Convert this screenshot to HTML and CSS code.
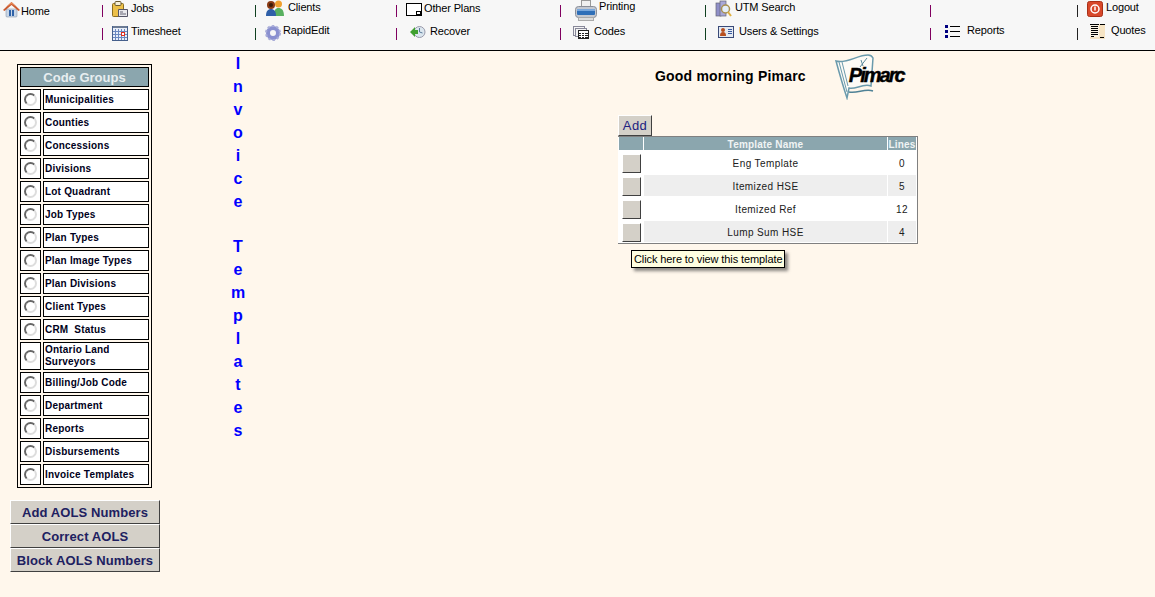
FILE: index.html
```html
<!DOCTYPE html>
<html lang="en">
<head>
    <meta charset="UTF-8">
    <title>Invoice Templates</title>
    <link rel="stylesheet" href="styles.css">
</head>
<body>
    <div class="nav">
        <div class="nav-cell nav-home">
            <svg class="ic ic-home" viewBox="0 0 17 17"><path d="M3 8h11v7a1 1 0 0 1-1 1H4a1 1 0 0 1-1-1z" fill="#c9d6e6" stroke="#7b8aa0" stroke-width=".5"/><path d="M0 9 8.500 1 17 9l-1.500 1-7-6-7 6z" fill="#c95a30"/><path d="M3 6 8.500 1 14 6 8.500 3z" fill="#e88a5a"/><rect x="6" y="9" width="5" height="6" fill="#2f62a8"/><rect x="8" y="9" width="1" height="6" fill="#c9d6e6"/></svg>
            <a class="lbl top-5 gap-1">Home</a>
        </div>
        <div class="nav-cell"><i class="sep sep-p"></i>
            <svg class="ic ic-jobs" viewBox="0 0 16 16"><rect x=".5" y="2.500" width="11" height="13" rx="1" fill="#ecc04a" stroke="#8a6d20"/><rect x="3" y=".5" width="6" height="4" rx="1" fill="#f6f0d8" stroke="#6a5a30"/><path d="M6.500 8.500h9v7h-9z" fill="#e8e8ec" stroke="#556"/><path d="M8 11h3M8 13h6" stroke="#667"/></svg>
            <a class="lbl top-2 gap-3">Jobs</a>
        </div>
        <div class="nav-cell"><i class="sep sep-g"></i>
            <svg class="ic ic-clients" viewBox="0 0 20 16"><circle cx="13.500" cy="4" r="3.500" fill="#f0a030"/><path d="M9 16c0-6 1.500-8 4.500-8s5.500 2 5.500 8z" fill="#58b060"/><circle cx="6" cy="5" r="4" fill="#8a3a14"/><circle cx="6" cy="5" r="2" fill="#3a1a08"/><path d="M1 16c0-5 2-7 5-7s5 2 5 7z" fill="#2f5fa8"/></svg>
            <a class="lbl top-1 gap-5">Clients</a>
        </div>
        <div class="nav-cell"><i class="sep sep-p"></i>
            <svg class="ic ic-plans" viewBox="0 0 16 13"><rect x=".5" y=".5" width="15" height="12" fill="#fff" stroke="#000"/><rect x="10.500" y="8.500" width="4" height="3" fill="#fff" stroke="#000"/></svg>
            <a class="lbl top-2 gap-2">Other Plans</a>
        </div>
        <div class="nav-cell"><i class="sep sep-p"></i>
            <svg class="ic ic-print" viewBox="0 0 22 21"><rect x="6.500" y=".5" width="9" height="7" fill="#f0f0f0" stroke="#999"/><rect x=".5" y="6.500" width="21" height="11" rx="3" fill="#c4c8d0" stroke="#8a8e98"/><rect x="2" y="9" width="18" height="6" rx="1" fill="#2f6fb8"/><rect x="2" y="9" width="18" height="2" fill="#7aa8dc"/><rect x="3.500" y="17.500" width="15" height="3" fill="#ddd" stroke="#aaa"/></svg>
            <a class="lbl top-0 gap-2">Printing</a>
        </div>
        <div class="nav-cell"><i class="sep sep-g"></i>
            <svg class="ic ic-utm" viewBox="0 0 17 17"><rect x="1" y="3" width="5" height="13" fill="#8f8fc8" stroke="#667" stroke-width=".7"/><rect x="5" y="1" width="6" height="15" fill="#a8a8d8" stroke="#667" stroke-width=".7"/><circle cx="10.500" cy="9" r="4" fill="#e4eef8" stroke="#a89050" stroke-width="1.500"/><path d="m13 12 3 4" stroke="#e0b040" stroke-width="2"/></svg>
            <a class="lbl top-1 gap-3">UTM Search</a>
        </div>
        <div class="nav-cell"><i class="sep sep-p"></i></div>
        <div class="nav-cell"><i class="sep sep-d"></i>
            <svg class="ic ic-logout" viewBox="0 0 16 16"><rect x=".5" y=".5" width="15" height="15" rx="2" fill="#d8482a" stroke="#a83018"/><circle cx="8" cy="8" r="4" fill="none" stroke="#fff" stroke-width="1.500"/><path d="M8 5.500v4" stroke="#fff" stroke-width="1.500"/></svg>
            <a class="lbl top-1 gap-3">Logout</a>
        </div>

        <div class="nav-cell"></div>
        <div class="nav-cell"><i class="sep sep-p"></i>
            <svg class="ic ic-time" viewBox="0 0 16 16"><rect x=".5" y="1.500" width="15" height="14" fill="#e8eef8" stroke="#46608c"/><rect x="1" y="1" width="14" height="2" fill="#6a7a94"/><path d="M1 6.500h14M1 9.500h14M1 12.500h14M3.500 4v11M6.500 4v11M9.500 4v11M12.500 4v11" stroke="#6a88c0"/><rect x="9.500" y="7.500" width="3" height="3" fill="#fff" stroke="#e03020"/></svg>
            <a class="lbl top-2 gap-3">Timesheet</a>
        </div>
        <div class="nav-cell"><i class="sep sep-g"></i>
            <svg class="ic ic-rapid" viewBox="0 0 16 16"><circle cx="8" cy="8" r="5" fill="none" stroke="#8a90d0" stroke-width="4"/><circle cx="8" cy="8" r="7" fill="none" stroke="#a8acd8" stroke-width="2" stroke-dasharray="2.500 2"/></svg>
            <a class="lbl top-1 gap-2">RapidEdit</a>
        </div>
        <div class="nav-cell"><i class="sep sep-p"></i>
            <svg class="ic ic-recover" viewBox="0 0 16 12"><ellipse cx="9.500" cy="6" rx="5.500" ry="5.500" fill="#dbe6ee" stroke="#99a"/><path d="M9.500 6V2M9.500 6l3 1" stroke="#5a7a9a"/><path d="M0 6l5-5v3h3v4H5v3z" fill="#3fa030"/></svg>
            <a class="lbl top-2 gap-4">Recover</a>
        </div>
        <div class="nav-cell"><i class="sep sep-p"></i>
            <svg class="ic ic-codes" viewBox="0 0 16 13"><rect x=".5" y=".5" width="11" height="9" fill="#f4f4f4" stroke="#889"/><rect x="2.500" y="2.500" width="11" height="8" fill="#f4f4f4" stroke="#889"/><rect x="5.500" y="4.500" width="10" height="8" fill="#fff" stroke="#222"/><path d="M6 7.500h9M6 9.500h9M6 11.500h9" stroke="#222"/><path d="M8.500 5v7M11.500 5v7" stroke="#fff"/></svg>
            <a class="lbl top-2 gap-5">Codes</a>
        </div>
        <div class="nav-cell"><i class="sep sep-g"></i>
            <svg class="ic ic-users" viewBox="0 0 16 12"><rect x=".5" y=".5" width="15" height="11" fill="#e4eaf2" stroke="#3a4a78"/><circle cx="5" cy="4" r="2" fill="#b85020"/><path d="M2 10c0-3 1-4 3-4s3 1 3 4z" fill="#b85020"/><path d="M10 3.500h4M10 5.500h4M10 7.500h4" stroke="#3a5aa0"/></svg>
            <a class="lbl top-2 gap-5">Users &amp; Settings</a>
        </div>
        <div class="nav-cell"><i class="sep sep-p"></i>
            <svg class="ic ic-reports" viewBox="0 0 15 13"><path d="M0 0h3v3H0zM0 5h3v3H0zM0 10h3v3H0z" fill="#000080"/><path d="M5 1.500h10M5 6.500h10M5 11.500h10" stroke="#000"/></svg>
            <a class="lbl top-1 gap-7">Reports</a>
        </div>
        <div class="nav-cell"><i class="sep sep-d"></i>
            <svg class="ic ic-quotes" viewBox="0 0 15 15"><rect width="15" height="15" fill="#f6e4c4"/><rect width="9" height="13" fill="#fbf3e4"/><path d="M0 .5h9M1 2.500h7M1 4.500h7M1 6.500h7M1 8.500h7M1 10.500h7M1 12.500h3M10 .5h5M10 13.500h4" stroke="#000"/></svg>
            <a class="lbl top-1 gap-6">Quotes</a>
        </div>
        <div class="nav-cell"></div>
    </div>

    <div class="main">
        <div class="left">
            <table class="groups">
                <colgroup><col class="col-rad"><col class="col-name"></colgroup>
                <tr><th colspan="2">Code Groups</th></tr>
                <tr><td class="rad"><i class="radio"></i></td><td>Municipalities</td></tr>
                <tr><td class="rad"><i class="radio"></i></td><td>Counties</td></tr>
                <tr><td class="rad"><i class="radio"></i></td><td>Concessions</td></tr>
                <tr><td class="rad"><i class="radio"></i></td><td>Divisions</td></tr>
                <tr><td class="rad"><i class="radio"></i></td><td>Lot Quadrant</td></tr>
                <tr><td class="rad"><i class="radio"></i></td><td>Job Types</td></tr>
                <tr><td class="rad"><i class="radio"></i></td><td>Plan Types</td></tr>
                <tr><td class="rad"><i class="radio"></i></td><td>Plan Image Types</td></tr>
                <tr><td class="rad"><i class="radio"></i></td><td>Plan Divisions</td></tr>
                <tr><td class="rad"><i class="radio"></i></td><td>Client Types</td></tr>
                <tr><td class="rad"><i class="radio"></i></td><td>CRM&nbsp; Status</td></tr>
                <tr><td class="rad"><i class="radio"></i></td><td class="tall">Ontario Land Surveyors</td></tr>
                <tr><td class="rad"><i class="radio"></i></td><td>Billing/Job Code</td></tr>
                <tr><td class="rad"><i class="radio"></i></td><td>Department</td></tr>
                <tr><td class="rad"><i class="radio"></i></td><td>Reports</td></tr>
                <tr><td class="rad"><i class="radio"></i></td><td>Disbursements</td></tr>
                <tr><td class="rad"><i class="radio"></i></td><td>Invoice Templates</td></tr>
            </table>
            <div class="aols">
                <button class="aols-btn">Add AOLS Numbers</button>
                <button class="aols-btn">Correct AOLS</button>
                <button class="aols-btn">Block AOLS Numbers</button>
            </div>
        </div>

        <div class="vword">
            <span>I</span><span>n</span><span>v</span><span>o</span><span>i</span><span>c</span><span>e</span><span class="blank">&nbsp;</span>
            <span>T</span><span>e</span><span>m</span><span>p</span><span>l</span><span>a</span><span>t</span><span>e</span><span>s</span>
        </div>

        <div class="center">
            <div class="greet">
                <h2>Good morning Pimarc</h2>
                <div class="logo">
                    <svg class="logo-flag" viewBox="0 0 46 46">
                        <path d="M1 7C12 10 22 1 33 1c3 0 4 1 5 3l-2 28c-8-3-16 4-22 2l-2 10C8 32 4 18 1 7z" fill="#fdfbf6" stroke="#6a9aac" stroke-width="1.500"/>
                        <path d="M4 8l8 30M7 8l6 24" stroke="#6a9aac" fill="none"/>
                        <path d="M32 4l-7 9M26 6l2 6" stroke="#5b8a9c" fill="none"/>
                        <path d="M14 38c8 2 16-4 24-1" stroke="#4f8296" stroke-width="1.500" fill="none"/>
                    </svg>
                    <span class="logo-text">Pimarc</span>
                </div>
            </div>
            <button class="add-btn">Add</button>
            <table class="tpl">
                <colgroup><col class="c1"><col><col class="c3"></colgroup>
                <tr><th></th><th>Template Name</th><th>Lines</th></tr>
                <tr><td><button class="sq"></button></td><td>Eng Template</td><td>0</td></tr>
                <tr class="alt"><td class="plain"><button class="sq"></button></td><td>Itemized HSE</td><td>5</td></tr>
                <tr><td><button class="sq"></button></td><td>Itemized Ref</td><td>12</td></tr>
                <tr class="alt"><td class="plain"><button class="sq"></button></td><td>Lump Sum HSE</td><td>4</td></tr>
            </table>
            <div class="tip">Click here to view this template</div>
        </div>
    </div>
</body>
</html>
```

FILE: styles.css
```css
body {
    margin: 0;
    height: 597px;
    overflow: hidden;
    background-color: #fff7ec;
    font-family: "Liberation Sans", Arial, sans-serif;
    color: #000;
}

/* top menu */
.nav {
    display: grid;
    grid-template-columns: 102px 153px 141px 164px 145px 225px 147px 78px;
    grid-template-rows: 23px 27px;
    height: 50px;
    background-color: #f7f7f7;
    border-bottom: 1px solid #000;
    font-size: 11px;
    letter-spacing: -.15px;
}

.nav-cell {
    display: flex;
    align-items: flex-start;
}

.nav-home {
    padding-left: 3px;
}

.sep {
    flex: none;
    width: 1px;
    height: 12px;
    margin-top: 5px;
    margin-right: 9px;
}

.sep-p { background-color: #800060; }
.sep-g { background-color: #104020; }
.sep-d { background-color: #222; }

.ic {
    flex: none;
    display: block;
    width: 16px;
    height: 16px;
}

.lbl {
    line-height: 13px;
    white-space: nowrap;
    color: #000;
}

.top-0 { margin-top: 0; }
.top-1 { margin-top: 1px; }
.top-2 { margin-top: 2px; }
.top-5 { margin-top: 5px; }
.gap-1 { margin-left: 1px; }
.gap-2 { margin-left: 2px; }
.gap-3 { margin-left: 3px; }
.gap-4 { margin-left: 4px; }
.gap-5 { margin-left: 5px; }
.gap-6 { margin-left: 6px; }
.gap-7 { margin-left: 7px; }

.ic-home { width: 17px; height: 17px; margin-top: 1px; }
.ic-jobs { margin-top: 1px; }
.ic-clients { width: 20px; margin-right: -2px; }
.ic-plans { height: 13px; margin-top: 3px; }
.ic-print { width: 22px; height: 21px; margin-left: 5px; }
.ic-utm { width: 17px; height: 17px; }
.ic-logout { margin-top: 1px; }
.ic-time { margin-top: 2px; }
.ic-rapid { margin-top: 2px; }
.ic-recover { height: 12px; margin-top: 3px; margin-left: 4px; }
.ic-codes { height: 13px; margin-top: 3px; margin-left: 3px; }
.ic-users { height: 12px; margin-top: 3px; margin-left: 3px; }
.ic-reports { width: 15px; height: 13px; margin-top: 2px; margin-left: 5px; }
.ic-quotes { width: 15px; height: 15px; margin-top: 1px; margin-left: 3px; }

/* page columns */
.main {
    display: flex;
    align-items: flex-start;
}

.left {
    flex: none;
    width: 150px;
    margin-left: 10px;
    padding-top: 13px;
}

/* code groups box */
.groups {
    width: 135px;
    margin-left: 7px;
    border: 1px solid #000;
    border-spacing: 2px;
    font-size: 10px;
    font-weight: bold;
    letter-spacing: .2px;
    table-layout: fixed;
}

.col-rad { width: 21px; }

.groups th {
    height: 18px;
    padding: 0;
    background-color: #8ba6ae;
    border: 1px solid #000;
    color: #e8eef0;
    font-size: 13px;
    letter-spacing: 0;
}

.groups td {
    height: 19px;
    padding: 0 0 0 1px;
    background-color: #fff;
    border: 1px solid #000;
    line-height: 12px;
    color: #000020;
}

.groups td.rad {
    padding: 0;
}

.groups td.tall {
    height: 26px;
}

.radio {
    display: block;
    width: 13px;
    height: 13px;
    margin: 0 auto;
    border-radius: 50%;
    border: 2px solid;
    border-color: #666 #ddd #ddd #666;
    box-sizing: border-box;
    background-color: #fff;
}

.aols {
    display: flex;
    flex-direction: column;
    margin-top: 12px;
}

.aols-btn {
    width: 150px;
    height: 24px;
    padding: 0;
    background-color: #d4d0c8;
    border: 1px solid;
    border-color: #fff #404040 #404040 #fff;
    color: #202060;
    font-family: "Liberation Sans", Arial, sans-serif;
    font-size: 13px;
    font-weight: bold;
    letter-spacing: .1px;
}

/* vertical title */
.vword {
    flex: none;
    display: flex;
    flex-direction: column;
    width: 20px;
    margin-left: 68px;
    padding-top: 1px;
    color: #0000ff;
    font-size: 16px;
    font-weight: bold;
    line-height: 23px;
    text-align: center;
}

.blank {
    height: 22px;
}

.center {
    position: relative;
    margin-left: 370px;
}

.greet {
    display: flex;
    align-items: flex-start;
    padding-left: 37px;
    height: 64px;
}

.greet h2 {
    margin: 17px 0 0;
    font-size: 14px;
    line-height: 17px;
    letter-spacing: .2px;
    white-space: nowrap;
}

.logo {
    position: relative;
    width: 70px;
    height: 46px;
    margin-left: 29px;
    margin-top: 3px;
}

.logo-flag {
    position: absolute;
    left: 0;
    top: 0;
    width: 46px;
    height: 46px;
}

.logo-text {
    position: absolute;
    left: 14px;
    top: 10px;
    font-size: 20px;
    font-weight: bold;
    font-style: italic;
    letter-spacing: -2px;
    -webkit-text-stroke: .4px #000;
    color: #000;
}

.add-btn {
    display: block;
    width: 34px;
    height: 21px;
    padding: 0;
    background-color: #d4d0c8;
    border: 1px solid;
    border-color: #fff #404040 #404040 #fff;
    color: #202080;
    font-family: "Liberation Sans", Arial, sans-serif;
    font-size: 13px;
    letter-spacing: .4px;
}

/* template list */
.tpl {
    width: 300px;
    padding-bottom: 1px;
    border: 1px solid #808080;
    border-left: none;
    border-spacing: 1px 0;
    background-color: #fff;
    font-size: 10px;
    letter-spacing: .4px;
    table-layout: fixed;
    color: #202020;
}

.c1 { width: 24px; }
.c3 { width: 28px; }

.tpl th {
    height: 11px;
    padding: 2px 0 0;
    background-color: #8ba6ae;
    color: #f0f4f4;
    font-size: 10px;
    line-height: 11px;
    letter-spacing: .2px;
}

.tpl td {
    height: 20px;
    padding: 1px 0 0;
    border-top: 2px solid #fff;
    text-align: center;
}

.tpl .alt td {
    background-color: #eeeeee;
}

.tpl .alt td.plain {
    background-color: #fff;
}

.sq {
    display: block;
    width: 19px;
    height: 19px;
    margin-left: 3px;
    padding: 0;
    background-color: #d4d0c8;
    border: 1px solid;
    border-color: #fff #404040 #404040 #fff;
}

.tip {
    position: absolute;
    left: 13px;
    top: 199px;
    padding: 1px 2px;
    background-color: #ffffe1;
    border: 1px solid #000;
    box-shadow: 3px 3px 3px rgba(60, 60, 60, .6);
    font-size: 11px;
    line-height: 14px;
    letter-spacing: -.1px;
    white-space: nowrap;
}
```
